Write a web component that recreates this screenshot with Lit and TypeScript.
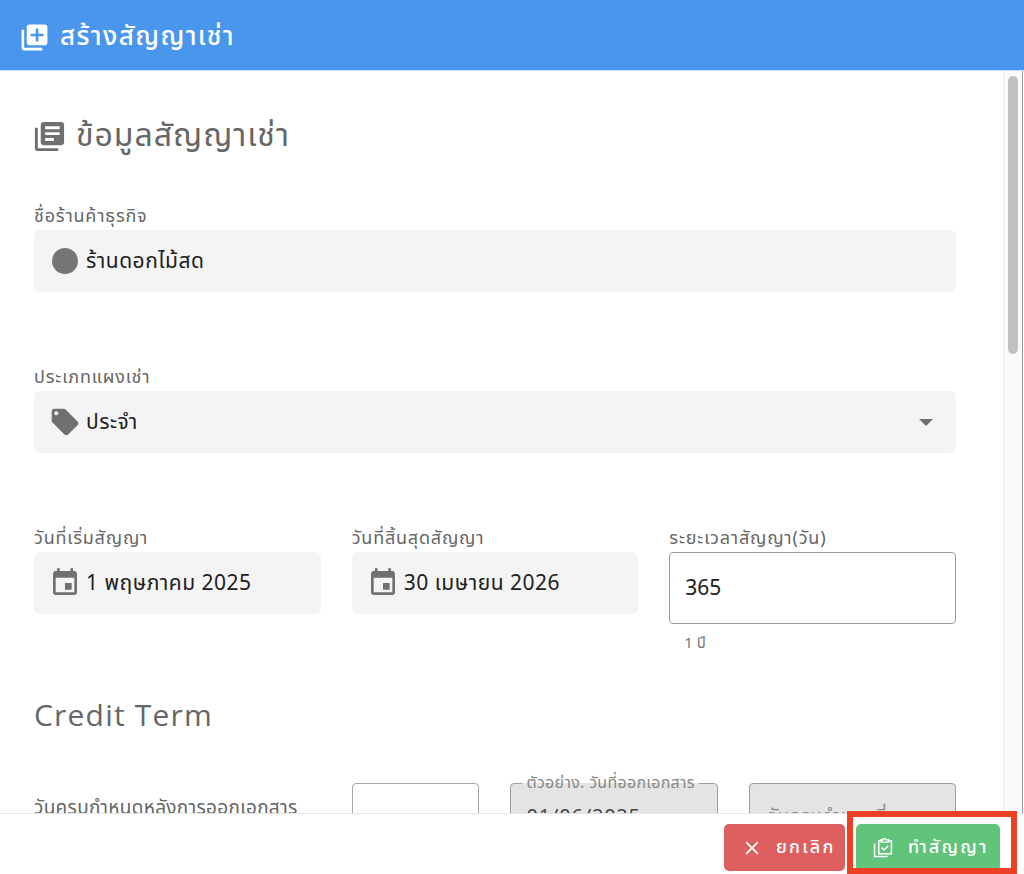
import { LitElement, html, css, svg } from "lit";
import { customElement } from "lit/decorators.js";

const icon = (d: unknown, cls: string) => html`<svg class=${cls} viewBox="0 0 24 24" fill="currentColor">${d}</svg>`;
const addBox = svg`<path d="M4 6H2v14c0 1.1.9 2 2 2h14v-2H4V6zm16-4H8c-1.1 0-2 .9-2 2v12c0 1.1.9 2 2 2h12c1.1 0 2-.9 2-2V4c0-1.1-.9-2-2-2zm-1 9h-4v4h-2v-4H9V9h4V5h2v4h4v2z"/>`;
const library = svg`<path d="M4 6H2v14c0 1.1.9 2 2 2h14v-2H4V6zm16-4H8c-1.1 0-2 .9-2 2v12c0 1.1.9 2 2 2h12c1.1 0 2-.9 2-2V4c0-1.1-.9-2-2-2zm-1 9H9V9h10v2zm-4 4H9v-2h6v2zm4-8H9V5h10v2z"/>`;
const tag = svg`<path d="M21.41 11.58l-9-9C12.05 2.22 11.55 2 11 2H4c-1.1 0-2 .9-2 2v7c0 .55.22 1.05.59 1.42l9 9c.36.36.86.58 1.41.58.55 0 1.05-.22 1.41-.59l7-7c.37-.36.59-.86.59-1.41 0-.55-.23-1.06-.59-1.42zM5.5 7C4.67 7 4 6.33 4 5.5S4.67 4 5.5 4 7 4.67 7 5.5 6.33 7 5.5 7z"/>`;
const calendar = svg`<path d="M17 12h-5v5h5v-5zM16 1v2H8V1H6v2H5c-1.11 0-1.99.9-1.99 2L3 19c0 1.1.89 2 2 2h14c1.1 0 2-.9 2-2V5c0-1.1-.9-2-2-2h-1V1h-2zm3 18H5V8h14v11z"/>`;
const close = svg`<path d="M19 6.41L17.59 5 12 10.59 6.41 5 5 6.41 10.59 12 5 17.59 6.41 19 12 13.41 17.59 19 19 17.59 13.41 12z"/>`;
const clip = svg`<g fill="none" stroke="currentColor" stroke-width="1.6"><path d="M2.8 7v14.2h14.2"/><path d="M10 4H7.4v14.2h13.8V4h-2.6"/><path d="M10 5.6V3h2c.3-2 2.9-2 3.2 0h2.8v2.6z"/><path d="M10.6 11.6l2.6 2.6 4.6-4.6"/></g>`;

@customElement("app-root")
export class AppRoot extends LitElement {
  static styles = css`
    :host { display: block; height: 874px; position: relative; overflow: hidden; background: #fff;
      font-family: "Noto Sans Thai", "Noto Sans", "Open Sans", sans-serif; color: #212121; }
    .page { height: 874px; display: flex; flex-direction: column; }
    header { height: 71px; flex: none; background: #4a96ed; border-bottom: 1px solid #c9ddf5; box-sizing: border-box;
      color: #fff; display: flex; align-items: center; gap: 10px; padding: 4px 0 0 19px; font-size: 26px; font-weight: 500; letter-spacing: 1.4px; }
    .i-h { width: 31px; height: 31px; }
    .mid { flex: 1; min-height: 0; display: flex; }
    .content { flex: 1; min-width: 0; overflow: hidden; padding: 0 47px 0 34px; }
    .bar { flex: none; width: 10px; margin-right: 1px; background: #fafafa; border-left: 1px solid #ececec; border-right: 1px solid #999; padding: 5px 4px 0; }
    .thumb { height: 278px; border-radius: 5px; background: #c1c1c1; }
    h2 { margin: 0; font-weight: 400; color: #666; }
    .title { display: flex; align-items: center; gap: 9px; font-size: 32px; letter-spacing: 1px; height: 40px; margin: 45px 0 0 -2px; }
    .i-t { width: 35px; height: 35px; color: #6f6f6f; }
    .lab { font-size: 18px; letter-spacing: 0.8px; line-height: 22px; color: #666; height: 24px; white-space: nowrap; }
    .box { height: 62px; border-radius: 6px; background: #f4f4f4; display: flex; align-items: center; gap: 5px; padding: 0 18px; box-sizing: border-box;
      font-size: 21px; letter-spacing: 0.5px; color: #212121; }
    .ic { width: 32px; height: 32px; margin-left: -3px; color: #707070; flex: none; }
    .dot { width: 26px; height: 26px; margin-right: 3px; border-radius: 50%; background: #757575; flex: none; }
    .f1 { margin-top: 50px; }
    .f2 { margin-top: 75px; }
    .caret { margin-left: auto; width: 0; height: 0; border: 7px solid transparent; border-top-color: #707070; border-bottom: 0; margin-right: 5px; }
    .row { display: grid; grid-template-columns: repeat(3, 1fr); column-gap: 31px; margin-top: 75px; }
    .input { height: 72px; border: 1px solid #9e9e9e; border-radius: 4px; box-sizing: border-box; display: flex; align-items: center; padding-left: 15px; font-size: 21px; color: #212121; }
    .hint { font-size: 15px; color: #777; padding: 10px 0 0 15px; line-height: 20px; }
    .credit { font-family: "Open Sans", sans-serif; font-size: 30px; letter-spacing: 1.2px; margin-top: 41px; line-height: 40px; color: #666; }
    .term { display: flex; margin-top: 48px; align-items: flex-start; }
    .term .tl { width: 318px; font-size: 19px; letter-spacing: 0.3px; color: #666; padding-top: 14px; line-height: 24px; white-space: nowrap; }
    .t1 { width: 128px; height: 72px; border: 1px solid #a8a8a8; border-radius: 4px; box-sizing: border-box; }
    .t2, .t3 { height: 72px; border: 1px solid #9e9e9e; border-radius: 4px; background: #e4e4e4; box-sizing: border-box; position: relative; }
    .t2 { width: 208px; margin-left: 31px; padding: 18px 0 0 15px; font-size: 20px; letter-spacing: 0.8px; color: #444; }
    .t3 { width: 207px; margin-left: 31px; padding: 19px 0 0 18px; font-size: 19px; color: #888; white-space: nowrap; }
    .legend { position: absolute; left: 11px; top: -9px; padding: 0 4px; font-size: 16px; letter-spacing: 0.3px; line-height: 16px; color: #888; background: linear-gradient(#fff 50%, #e4e4e4 50%); white-space: nowrap; }
    footer { height: 61px; flex: none; border-top: 1px solid #e6e6e6; background: #fff; box-sizing: border-box; display: flex; justify-content: flex-end; gap: 11px; padding: 10px 24px 0 0; position: relative; z-index: 1; }
    .btn { height: 47px; border-radius: 5px; color: #fff; display: flex; align-items: center; font-size: 18px; font-weight: 500; letter-spacing: 2.2px; box-sizing: border-box; }
    .cancel { width: 121px; background: #de5f5f; padding-left: 17px; gap: 13px; }
    .ok { width: 144px; background: #62c37a; padding-left: 16px; gap: 14px; }
    .i-b { width: 22px; height: 22px; }
    .frame { position: absolute; left: 847px; top: 811px; width: 170px; height: 63px; border: 6px solid #ee4025; box-sizing: border-box; z-index: 2; pointer-events: none; }
  `;

  render() {
    return html`
      <div class="page">
        <header>${icon(addBox, "i-h")}<span>สร้างสัญญาเช่า</span></header>
        <div class="mid">
          <div class="content">
            <h2 class="title">${icon(library, "i-t")}<span>ข้อมูลสัญญาเช่า</span></h2>
            <div class="f1">
              <div class="lab">ชื่อร้านค้าธุรกิจ</div>
              <div class="box"><span class="dot"></span><span>ร้านดอกไม้สด</span></div>
            </div>
            <div class="f2">
              <div class="lab">ประเภทแผงเช่า</div>
              <div class="box">${icon(tag, "ic")}<span>ประจำ</span><span class="caret"></span></div>
            </div>
            <div class="row">
              <div><div class="lab">วันที่เริ่มสัญญา</div><div class="box">${icon(calendar, "ic")}<span>1 พฤษภาคม 2025</span></div></div>
              <div><div class="lab">วันที่สิ้นสุดสัญญา</div><div class="box">${icon(calendar, "ic")}<span>30 เมษายน 2026</span></div></div>
              <div><div class="lab">ระยะเวลาสัญญา(วัน)</div><div class="input">365</div><div class="hint">1 ปี</div></div>
            </div>
            <h2 class="credit">Credit Term</h2>
            <div class="term">
              <div class="tl">วันครบกำหนดหลังการออกเอกสาร</div>
              <div class="t1"></div>
              <div class="t2"><span class="legend">ตัวอย่าง. วันที่ออกเอกสาร</span>01/06/2025</div>
              <div class="t3">วันครบกำหนดที่</div>
            </div>
          </div>
          <div class="bar"><div class="thumb"></div></div>
        </div>
        <footer>
          <div class="btn cancel">${icon(close, "i-b")}<span>ยกเลิก</span></div>
          <div class="btn ok">${icon(clip, "i-b")}<span>ทำสัญญา</span></div>
        </footer>
      </div>
      <div class="frame"></div>
    `;
  }
}
